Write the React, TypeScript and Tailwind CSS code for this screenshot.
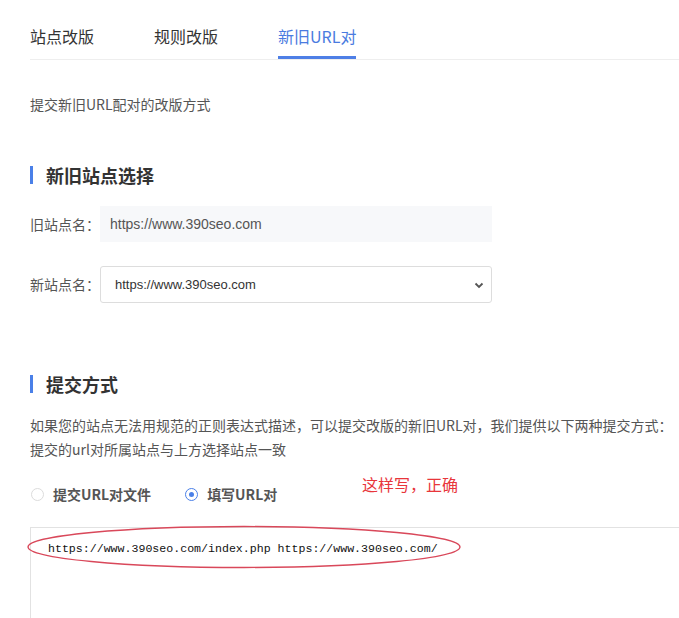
import { useState } from "react";

const font = "font-['Microsoft_YaHei','Noto_Sans_CJK_SC',sans-serif]";

function SectionTitle({ children }: { children: string }) {
  return (
    <div className="flex items-center">
      <span className="h-[18px] w-[3px] bg-[#4a80e8]" />
      <h2 className="ml-[13px] text-[18px] font-bold leading-[24px] text-[#333]">
        {children}
      </h2>
    </div>
  );
}

function Radio({ checked, label }: { checked: boolean; label: string }) {
  return (
    <label className="flex items-center">
      <span
        className={
          checked
            ? "flex h-[13px] w-[13px] items-center justify-center rounded-full border border-[#4a80e8] bg-white"
            : "h-[13px] w-[13px] rounded-full border border-[#dcdcdc] bg-white"
        }
      >
        {checked && <span className="h-[5px] w-[5px] rounded-full bg-[#4a80e8]" />}
      </span>
      <span className="ml-[9px] text-[14px] font-bold text-[#555]">{label}</span>
    </label>
  );
}

export default function App() {
  const [tab] = useState(2);
  const tabs = ["站点改版", "规则改版", "新旧URL对"];

  return (
    <div className={`${font} h-[618px] overflow-hidden bg-white pl-[30px]`}>
      {/* tabs */}
      <div className="flex gap-[60px] border-b border-[#eee]">
        {tabs.map((t, i) => (
          <div
            key={t}
            className={
              i === tab
                ? "border-b-[3px] border-[#4e7fe6] pb-[10px] pt-[26px] text-[16px] leading-[20px] text-[#4a7be0]"
                : "border-b-[3px] border-transparent pb-[10px] pt-[26px] text-[16px] leading-[20px] text-[#333]"
            }
          >
            {t}
          </div>
        ))}
      </div>

      <p className="mt-[34px] text-[14px] leading-[20px] text-[#555]">
        提交新旧URL配对的改版方式
      </p>

      <div className="mt-[49px]">
        <SectionTitle>新旧站点选择</SectionTitle>
      </div>

      <div className="mt-[19px] flex items-center">
        <span className="w-[70px] text-[14px] text-[#555]">旧站点名：</span>
        <div className="flex h-[36px] w-[392px] items-center bg-[#f7f8fa] pl-[10px] font-['Liberation_Sans',sans-serif] text-[14px] text-[#555]">
          https://www.390seo.com
        </div>
      </div>

      <div className="mt-[24px] flex items-center">
        <span className="w-[70px] text-[14px] text-[#555]">新站点名：</span>
        <div className="flex h-[37px] w-[392px] items-center justify-between rounded-[3px] border border-[#ddd] pl-[14px] pr-[6px] font-['Liberation_Sans',sans-serif] text-[13px] text-[#333]">
          <span>https://www.390seo.com</span>
          <svg width="12" height="12" viewBox="0 0 12 12" fill="none">
            <path d="M2.5 4.5 6 8l3.5-3.5" stroke="#555" strokeWidth="1.8" />
          </svg>
        </div>
      </div>

      <div className="mt-[69px]">
        <SectionTitle>提交方式</SectionTitle>
      </div>

      <p className="mt-[17px] text-[14px] leading-[24px] text-[#555]">
        如果您的站点无法用规范的正则表达式描述，可以提交改版的新旧URL对，我们提供以下两种提交方式：
        <br />
        提交的url对所属站点与上方选择站点一致
      </p>

      <div className="relative mt-[21px] flex h-[24px] items-center gap-[34px] pl-[1px]">
        <Radio checked={false} label="提交URL对文件" />
        <Radio checked label="填写URL对" />
        <span className="absolute left-[332px] top-[-9px] text-[16px] leading-[22px] text-[#e8363b]">
          这样写，正确
        </span>
      </div>

      <div className="relative mt-[21px] h-[120px] w-[700px] border-l border-t border-[#e2e2e2] pl-[17px] pt-[13px]">
        <div className="font-['Liberation_Mono',monospace] text-[11.6px] leading-[16px] text-[#111]">
          https://www.390seo.com/index.php https://www.390seo.com/
        </div>
        <svg
          className="absolute left-[-6px] top-[-3px]"
          width="440"
          height="46"
          viewBox="0 0 440 46"
        >
          <ellipse cx="219" cy="22" rx="216" ry="20.5" fill="none" stroke="#d9485a" strokeWidth="1.3" />
        </svg>
      </div>
    </div>
  );
}
